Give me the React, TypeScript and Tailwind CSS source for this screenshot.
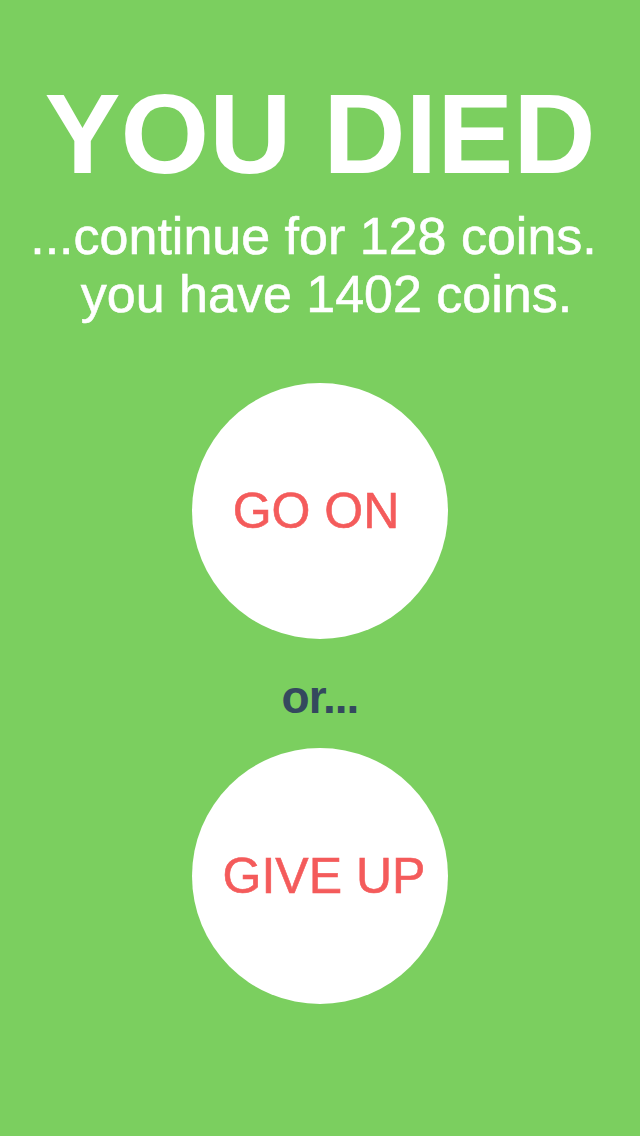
export default function App() {
  return (
    <div
      className="flex min-h-[1136px] w-full flex-col items-center bg-[#7bcf5f] pt-[77px]"
      style={{ fontFamily: '"Liberation Sans", Arial, sans-serif' }}
    >
      <h1 className="text-[114px] font-bold leading-none text-white">YOU DIED</h1>

      <div className="mt-4 flex flex-col items-center text-[52px] leading-[58px] text-white [-webkit-text-stroke:0.6px_white]">
        <p className="pr-[13px]">...continue for 128 coins.</p>
        <p className="pl-[13px]">you have 1402 coins.</p>
      </div>

      <button className="mt-[60px] flex h-64 w-64 items-center justify-center rounded-full bg-white pr-2 text-[50px] text-[#f45b5b] [-webkit-text-stroke:0.6px_#f45b5b]">
        GO ON
      </button>

      <p className="mt-[35px] text-[46px] font-bold leading-none tracking-[-1px] text-[#34495e]">
        or...
      </p>

      <button className="mt-[28px] flex h-64 w-64 items-center justify-center rounded-full bg-white pl-2 text-[50px] text-[#f45b5b] [-webkit-text-stroke:0.6px_#f45b5b]">
        GIVE UP
      </button>
    </div>
  );
}
